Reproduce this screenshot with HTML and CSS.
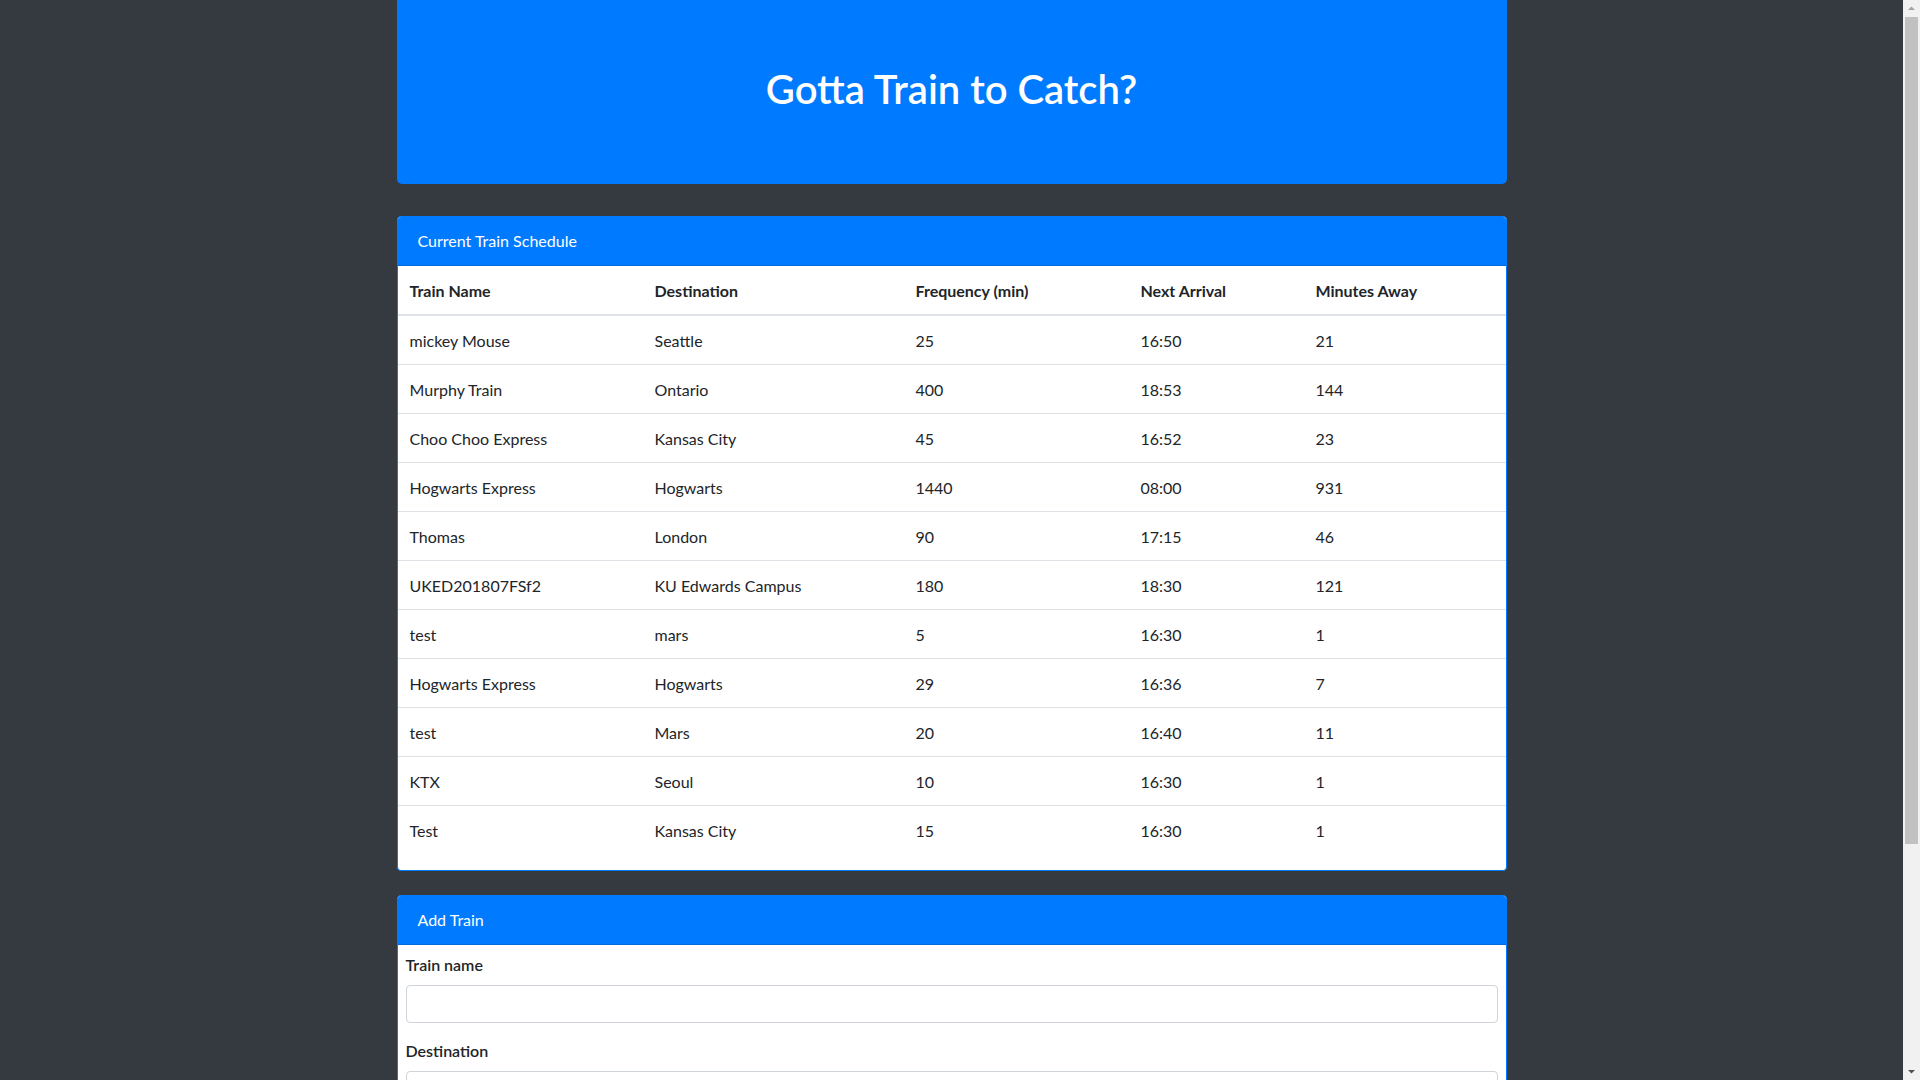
FILE: index.html
```html
<!DOCTYPE html>
<html lang="en">
<head>
<meta charset="utf-8">
<title>Train Scheduler</title>
<link rel="stylesheet" href="styles.css">
</head>
<body>
<div class="page">
  <div class="container">
    <div class="jumbotron">
      <h1 class="title">Gotta Train to Catch?</h1>
    </div>

    <div class="card">
      <div class="card-header">Current Train Schedule</div>
      <table class="table">
        <thead>
          <tr>
            <th class="c1">Train Name</th>
            <th class="c2">Destination</th>
            <th class="c3">Frequency (min)</th>
            <th class="c4">Next Arrival</th>
            <th class="c5">Minutes Away</th>
          </tr>
        </thead>
        <tbody>
          <tr><td>mickey Mouse</td><td>Seattle</td><td>25</td><td>16:50</td><td>21</td></tr>
          <tr><td>Murphy Train</td><td>Ontario</td><td>400</td><td>18:53</td><td>144</td></tr>
          <tr><td>Choo Choo Express</td><td>Kansas City</td><td>45</td><td>16:52</td><td>23</td></tr>
          <tr><td>Hogwarts Express</td><td>Hogwarts</td><td>1440</td><td>08:00</td><td>931</td></tr>
          <tr><td>Thomas</td><td>London</td><td>90</td><td>17:15</td><td>46</td></tr>
          <tr><td>UKED201807FSf2</td><td>KU Edwards Campus</td><td>180</td><td>18:30</td><td>121</td></tr>
          <tr><td>test</td><td>mars</td><td>5</td><td>16:30</td><td>1</td></tr>
          <tr><td>Hogwarts Express</td><td>Hogwarts</td><td>29</td><td>16:36</td><td>7</td></tr>
          <tr><td>test</td><td>Mars</td><td>20</td><td>16:40</td><td>11</td></tr>
          <tr><td>KTX</td><td>Seoul</td><td>10</td><td>16:30</td><td>1</td></tr>
          <tr><td>Test</td><td>Kansas City</td><td>15</td><td>16:30</td><td>1</td></tr>
        </tbody>
      </table>
    </div>

    <div class="card card-form">
      <div class="card-header">Add Train</div>
      <form class="card-body">
        <div class="form-group">
          <label class="label" for="name">Train name</label>
          <input class="form-control" id="name" type="text">
        </div>
        <div class="form-group">
          <label class="label" for="dest">Destination</label>
          <input class="form-control" id="dest" type="text">
        </div>
        <div class="form-group">
          <label class="label" for="first">First Train Time (HH:mm - military time)</label>
          <input class="form-control" id="first" type="text">
        </div>
        <div class="form-group">
          <label class="label" for="freq">Frequency (min)</label>
          <input class="form-control" id="freq" type="text">
        </div>
        <button class="btn" type="button">Submit</button>
      </form>
    </div>
  </div>
</div>
<div class="scrollbar" aria-hidden="true">
  <div class="sb-btn">
    <svg width="17" height="17" viewBox="0 0 17 17"><path d="M5 10h7L8.5 6.5z" fill="#a3a3a3"/></svg>
  </div>
  <div class="sb-track"><div class="sb-thumb"></div></div>
  <div class="sb-btn">
    <svg width="17" height="17" viewBox="0 0 17 17"><path d="M5 7h7L8.5 10.5z" fill="#505050"/></svg>
  </div>
</div>
</body>
</html>
```
FILE: styles.css
```css
html, body {
  margin: 0;
  padding: 0;
  height: 100%;
  overflow: hidden;
}
body {
  display: flex;
  background: #343a40;
  font-family: "Lato", "Open Sans", sans-serif;
  font-size: 16px;
  line-height: 1.5;
  color: #212529;
}
*, *::before, *::after { box-sizing: border-box; }

.page {
  flex: 1;
  min-width: 0;
  height: 100%;
  overflow: hidden;
}

.scrollbar {
  width: 17px;
  flex: none;
  height: 100%;
  background: #f1f1f1;
  display: flex;
  flex-direction: column;
}
.sb-btn {
  height: 17px;
  flex: none;
}
.sb-btn svg { display: block; }
.sb-track {
  flex: 1;
  padding: 0 2px;
}
.sb-thumb {
  height: 827px;
  background: #c1c1c1;
}

.container {
  width: 1140px;
  margin: 0 auto;
  padding: 0 15px 22px;
}

.jumbotron {
  background: #007bff;
  padding: 65px 32px 63px;
  margin-bottom: 32px;
  border-radius: 0 0 5px 5px;
}
.title {
  margin: 0 0 8px;
  font-size: 40px;
  line-height: 48px;
  font-weight: 600;
  color: #fff;
  text-align: center;
}

.card {
  background: #fff;
  border: 1px solid #007bff;
  border-radius: 4px;
  overflow: hidden;
}
.card-form { margin-top: 24px; }
.card-header {
  background: #007bff;
  color: #fff;
  padding: 12px 20px;
  line-height: 24px;
  border-bottom: 1px solid rgba(0,0,0,.125);
}

.table {
  width: 100%;
  border-collapse: collapse;
  margin-bottom: 16px;
  table-layout: fixed;
}
.table th, .table td {
  padding: 13px 12px 11px;
  text-align: left;
  vertical-align: top;
  border-top: 1px solid #dee2e6;
  line-height: 24px;
}
.table thead th {
  border-top: 0;
  border-bottom: 2px solid #dee2e6;
  font-weight: 700;
}
.table tbody tr:first-child td { border-top: 0; }
.c1 { width: 245px; }
.c2 { width: 261px; }
.c3 { width: 225px; }
.c4 { width: 175px; }

.card-body { padding: 8px; }
.form-group { margin-bottom: 16px; }
.label {
  display: block;
  font-weight: 600;
  margin-bottom: 8px;
  line-height: 24px;
}
.form-control {
  display: block;
  width: 100%;
  height: 38px;
  padding: 6px 12px;
  font: inherit;
  border: 1px solid #ced4da;
  border-radius: 4px;
  background: #fff;
}
.btn {
  font: inherit;
  color: #fff;
  background: #007bff;
  border: 1px solid #007bff;
  border-radius: 4px;
  padding: 6px 12px;
  line-height: 24px;
}
```
